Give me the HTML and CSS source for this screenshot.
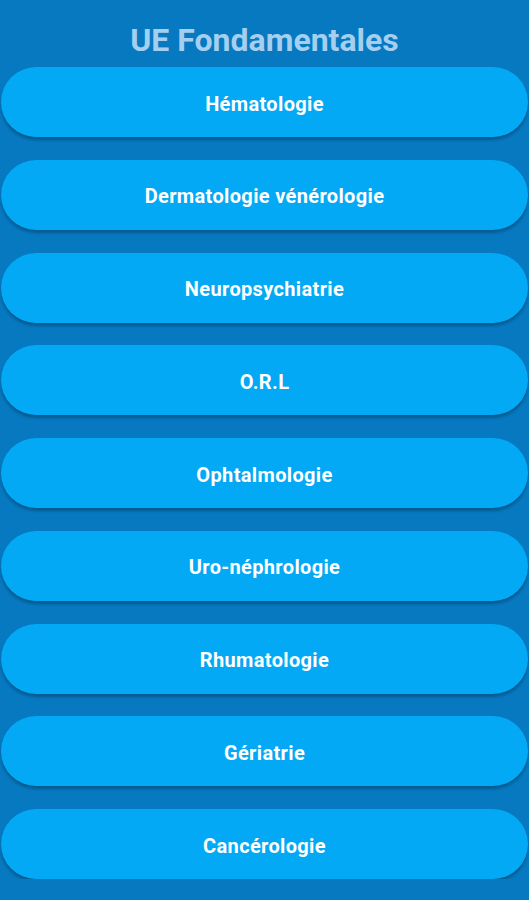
FILE: index.html
```html
<!DOCTYPE html>
<html lang="fr">

<head>
    <meta charset="UTF-8">
    <meta name="viewport" content="width=device-width, initial-scale=1.0">
    <title>UE Fondamentales</title>
    <link rel="stylesheet" href="styles.css">
</head>

<body>
    <div class="container">
        <h1 class="title">UE Fondamentales</h1>

        <div class="list">
            <button class="item">Hématologie</button>
            <button class="item">Dermatologie vénérologie</button>
            <button class="item">Neuropsychiatrie</button>
            <button class="item">O.R.L</button>
            <button class="item">Ophtalmologie</button>
            <button class="item">Uro-néphrologie</button>
            <button class="item">Rhumatologie</button>
            <button class="item">Gériatrie</button>
            <button class="item">Cancérologie</button>
        </div>
    </div>
</body>

</html>
```

FILE: styles.css
```css
body,
html {
    padding: 0;
    margin: 0;
    background: #0679c1;
    font-family: Roboto, 'Liberation Sans', sans-serif;
}

.container {
    padding: 0 1px;
}

.title {
    margin: 0;
    height: 67px;
    line-height: 80px;
    text-align: center;
    font-size: 32px;
    font-weight: 700;
    color: #a5cfee;
}

.list {
    display: flex;
    flex-direction: column;
    gap: 22.75px;
}

.item {
    height: 70px;
    padding: 3px 0 0;
    border: none;
    border-radius: 35px;
    background: #03a9f4;
    color: #fff;
    font-family: inherit;
    font-size: 20px;
    font-weight: 700;
    letter-spacing: 0.35px;
    box-shadow: 0 3px 3px rgba(0, 0, 0, 0.25);
}
```
